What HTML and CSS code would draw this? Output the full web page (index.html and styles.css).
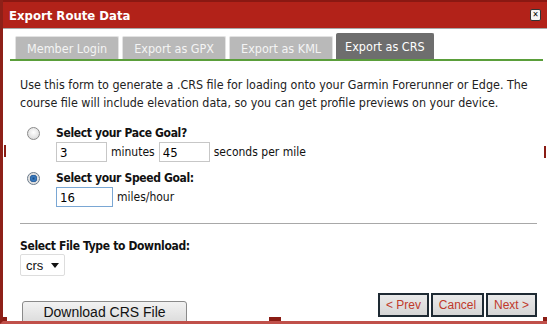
FILE: index.html
```html
<!DOCTYPE html>
<html lang="en">
<head>
    <meta charset="UTF-8">
    <title>Export Route Data</title>
    <link rel="stylesheet" href="styles.css">
</head>
<body>
    <div class="dialog">
        <div class="titlebar">
            <span class="title">Export Route Data</span>
            <span class="close-btn">&#x2715;</span>
        </div>
        <div class="dialog-body">
            <div class="tabs">
                <div class="tab">Member Login</div>
                <div class="tab">Export as GPX</div>
                <div class="tab">Export as KML</div>
                <div class="tab active">Export as CRS</div>
            </div>
            <div class="panel">
                <p class="intro">Use this form to generate a .CRS file for loading onto your Garmin Forerunner or Edge. The course file will include elevation data, so you can get profile previews on your device.</p>

                <div class="goal">
                    <span class="radio"></span>
                    <div class="goal-fields">
                        <label class="goal-label">Select your Pace Goal?</label>
                        <div class="field-row">
                            <input class="txt" type="text" value="3">
                            <span>minutes</span>
                            <input class="txt" type="text" value="45">
                            <span>seconds per mile</span>
                        </div>
                    </div>
                </div>

                <div class="goal">
                    <span class="radio checked"></span>
                    <div class="goal-fields">
                        <label class="goal-label">Select your Speed Goal:</label>
                        <div class="field-row">
                            <input class="txt wide focus" type="text" value="16">
                            <span>miles/hour</span>
                        </div>
                    </div>
                </div>

                <hr class="divider">

                <label class="goal-label">Select File Type to Download:</label>
                <div class="select">crs <span class="caret"></span></div>

                <div class="footer">
                    <button class="download-btn">Download CRS File</button>
                    <div class="nav-btns">
                        <button class="nav-btn">&lt; Prev</button>
                        <button class="nav-btn">Cancel</button>
                        <button class="nav-btn">Next &gt;</button>
                    </div>
                </div>
            </div>
        </div>

        <!-- resize grips -->
        <span class="grip grip-left"></span>
        <span class="grip grip-right"></span>
        <span class="grip grip-bottom"></span>
        <span class="grip grip-corner-l"></span>
        <span class="grip grip-corner-r"></span>
    </div>
</body>
</html>
```

FILE: styles.css
```css
* {
    margin: 0;
    padding: 0;
    box-sizing: border-box;
}

html, body {
    background: #fff;
}

body {
    font-family: "DejaVu Sans Condensed", "DejaVu Sans", sans-serif;
    font-size: 12px;
    color: #111;
}

.dialog {
    position: relative;
    width: 547px;
    height: 324px;
    background: #fff;
    border-left: 3px solid #8e2018;
    border-bottom: 3px solid #c0504a;
    overflow: hidden;
    display: flex;
    flex-direction: column;
}

.titlebar {
    height: 29px;
    background: #b22219;
    border-top: 2px solid #8a1812;
    border-bottom: 1px solid #a8a8a8;
    display: flex;
    align-items: center;
    justify-content: space-between;
    padding: 0 6px 0 6px;
    flex-shrink: 0;
}

.title {
    color: #fff;
    font-weight: bold;
    font-size: 13px;
}

.close-btn {
    width: 11px;
    height: 12px;
    background: #f4f4f4;
    border: 1px solid #333;
    border-radius: 2px;
    font-size: 8px;
    font-weight: bold;
    line-height: 10px;
    text-align: center;
    color: #000;
}

.dialog-body {
    flex: 1;
    padding: 7px 4px 0 7px;
}

.tabs {
    display: flex;
    gap: 3px;
    padding-left: 5px;
    border-bottom: 2px solid #5a9e3a;
    height: 25px;
    align-items: flex-end;
}

.tab {
    height: 23px;
    padding: 0 11px;
    background: #b9b9b9;
    color: #f4f4f4;
    font-size: 12.5px;
    line-height: 23px;
    border: 1px solid #e2e2e2;
    border-bottom: none;
    border-radius: 2px 2px 0 0;
}

.tab.active {
    height: 26px;
    line-height: 25px;
    padding: 0 8px;
    background: #6e6e6e;
    color: #fff;
    border-color: #6e6e6e;
}

.panel {
    padding: 0 6px 0 10px;
}

.intro {
    font-size: 12.4px;
    line-height: 18px;
    margin-top: 15px;
    color: #222;
}

.goal {
    display: flex;
    align-items: flex-start;
    margin-top: 13px;
}

.goal + .goal {
    margin-top: 8px;
}

.radio {
    width: 13px;
    height: 13px;
    margin: 2px 16px 0 7px;
    border-radius: 50%;
    border: 1px solid #8a8a8a;
    background: radial-gradient(circle at 50% 40%, #fff 0, #e4e4e4 60%, #cfcfcf 100%);
    flex-shrink: 0;
}

.radio.checked {
    background: radial-gradient(circle, #1d4e86 0, #3a7cc0 2px, #2a5f9c 3.5px, #dcdcdc 4px, #f4f4f4 100%);
    border-color: #6a7a8a;
}

.goal-label {
    display: block;
    font-weight: bold;
    font-size: 12px;
    letter-spacing: -0.35px;
    color: #111;
    line-height: 16px;
}

.field-row {
    display: flex;
    align-items: center;
    gap: 4px;
    margin-top: 1px;
}

.txt {
    width: 51px;
    height: 20px;
    border: 1px solid #c7c7c7;
    font-family: "DejaVu Sans Condensed", "DejaVu Sans", sans-serif;
    font-size: 13px;
    padding: 0 3px;
    color: #000;
    background: #fff;
    outline: none;
}

.txt.wide {
    width: 57px;
}

.txt.focus {
    border-color: #7aa7d4;
}

.divider {
    border: none;
    border-top: 1px solid #a8a8a8;
    margin: 16px 0 14px 0;
}

.select {
    display: flex;
    align-items: center;
    justify-content: space-between;
    width: 45px;
    height: 22px;
    padding: 0 5px;
    border: 1px solid #ddd;
    border-radius: 2px;
    font-family: "Liberation Sans", Arial, sans-serif;
    font-size: 13px;
}

.caret {
    width: 0;
    height: 0;
    border-left: 4px solid transparent;
    border-right: 4px solid transparent;
    border-top: 5px solid #111;
}

.footer {
    display: flex;
    justify-content: space-between;
    align-items: flex-start;
    margin-top: 17px;
}

.download-btn {
    margin: 8px 0 0 2px;
    width: 165px;
    height: 22px;
    border: 1px solid #8a8a8a;
    border-radius: 3px 3px 0 0;
    background: linear-gradient(#f2f2f2, #dcdcdc);
    font-family: "Liberation Sans", Arial, sans-serif;
    font-size: 14px;
    color: #111;
}

.nav-btns {
    display: flex;
    gap: 2px;
}

.nav-btn {
    width: 51px;
    height: 24px;
    border: 2px solid #1e2a33;
    background: linear-gradient(#e9e9e9, #d6d6d6);
    font-family: "Liberation Sans", Arial, sans-serif;
    font-size: 12px;
    color: #c0392b;
}

.nav-btn:nth-child(2) {
    width: 53px;
}

.grip {
    position: absolute;
    background-image: radial-gradient(circle, #8a1c14 0.8px, transparent 1px);
    background-size: 2px 2px;
}

.grip-left {
    left: 1px;
    top: 145px;
    width: 2px;
    height: 12px;
}

.grip-right {
    right: 1px;
    top: 146px;
    width: 2px;
    height: 12px;
}

.grip-bottom {
    left: 266px;
    bottom: 0;
    width: 12px;
    height: 4px;
}

.grip-corner-l {
    left: 0;
    bottom: 0;
    width: 4px;
    height: 4px;
}

.grip-corner-r {
    right: 0;
    bottom: 0;
    width: 4px;
    height: 4px;
}
```
